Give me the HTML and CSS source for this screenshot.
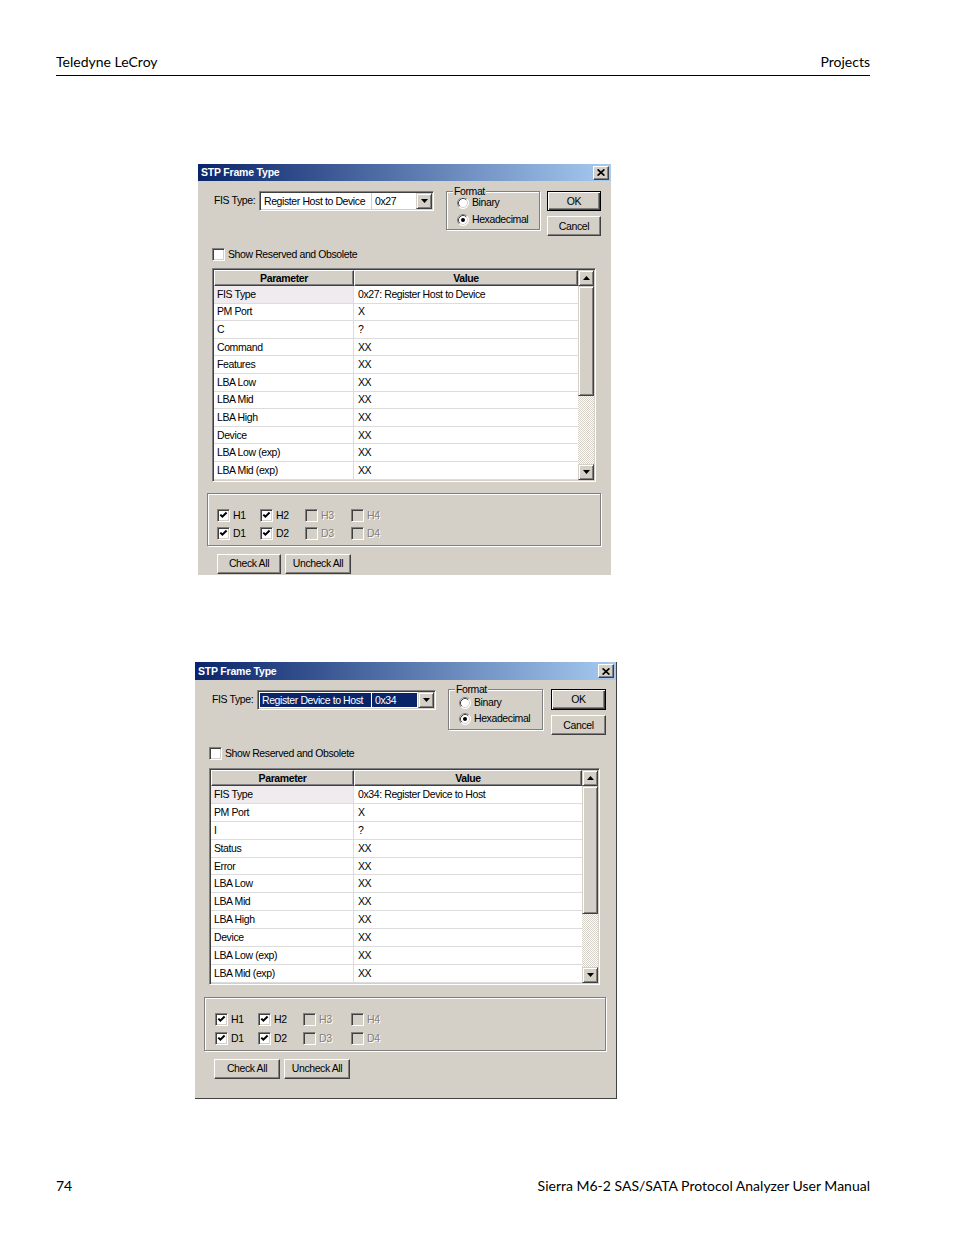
FILE: index.html
```html
<!DOCTYPE html>
<html>
<head>
<meta charset="utf-8">
<title>STP Frame Type</title>
<link rel="stylesheet" href="styles.css">
</head>
<body>
<div class="page">
  <header class="running-head"><span>Teledyne LeCroy</span><span>Projects</span></header>

  <section class="dialog d1">
    <div class="titlebar">
      <span class="title">STP Frame Type</span>
      <span class="close"><svg width="8" height="7" viewBox="0 0 8 7"><path d="M0.6 0.4 L7.4 6.6 M7.4 0.4 L0.6 6.6" stroke="#000" stroke-width="1.7" fill="none"/></svg></span>
    </div>
    <div class="toprow">
      <span class="fis-label">FIS Type:</span>
      <div class="combo">
        <div class="combo-field"><span class="c1">Register Host to Device</span><span class="c2">0x27</span></div>
        <span class="combo-btn"><svg width="7" height="4" viewBox="0 0 7 4"><path d="M0 0 H7 L3.5 4 Z" fill="#000"/></svg></span>
      </div>
      <div class="fmt">
        <span class="fmt-legend">Format</span>
        <div class="radio-row">
          <svg class="radio" width="12" height="12" viewBox="0 0 12 12"><circle cx="6" cy="6" r="5.5" fill="#fff"/><path d="M2.11 9.89 A5.5 5.5 0 0 1 9.89 2.11" stroke="#808080" fill="none"/><path d="M9.89 2.11 A5.5 5.5 0 0 1 2.11 9.89" stroke="#fff" fill="none"/><path d="M2.82 9.18 A4.5 4.5 0 0 1 9.18 2.82" stroke="#404040" fill="none"/><path d="M9.18 2.82 A4.5 4.5 0 0 1 2.82 9.18" stroke="#d4d0c8" fill="none"/></svg>
          <span>Binary</span>
        </div>
        <div class="radio-row">
          <svg class="radio" width="12" height="12" viewBox="0 0 12 12"><circle cx="6" cy="6" r="5.5" fill="#fff"/><path d="M2.11 9.89 A5.5 5.5 0 0 1 9.89 2.11" stroke="#808080" fill="none"/><path d="M9.89 2.11 A5.5 5.5 0 0 1 2.11 9.89" stroke="#fff" fill="none"/><path d="M2.82 9.18 A4.5 4.5 0 0 1 9.18 2.82" stroke="#404040" fill="none"/><path d="M9.18 2.82 A4.5 4.5 0 0 1 2.82 9.18" stroke="#d4d0c8" fill="none"/><circle cx="6" cy="6" r="2" fill="#000"/></svg>
          <span>Hexadecimal</span>
        </div>
      </div>
      <div class="btncol">
        <div class="btn default">OK</div>
        <div class="btn">Cancel</div>
      </div>
    </div>
    <div class="cbrow">
      <span class="cb"></span><span>Show Reserved and Obsolete</span>
    </div>
    <div class="grid">
      <div class="grid-main">
        <div class="ghead"><span class="h p">Parameter</span><span class="h v">Value</span></div>
        <div class="grow"><span class="cell p first">FIS Type</span><span class="cell v">0x27: Register Host to Device</span></div>
        <div class="grow"><span class="cell p">PM Port</span><span class="cell v">X</span></div>
        <div class="grow"><span class="cell p">C</span><span class="cell v">?</span></div>
        <div class="grow"><span class="cell p">Command</span><span class="cell v">XX</span></div>
        <div class="grow"><span class="cell p">Features</span><span class="cell v">XX</span></div>
        <div class="grow"><span class="cell p">LBA Low</span><span class="cell v">XX</span></div>
        <div class="grow"><span class="cell p">LBA Mid</span><span class="cell v">XX</span></div>
        <div class="grow"><span class="cell p">LBA High</span><span class="cell v">XX</span></div>
        <div class="grow"><span class="cell p">Device</span><span class="cell v">XX</span></div>
        <div class="grow"><span class="cell p">LBA Low (exp)</span><span class="cell v">XX</span></div>
        <div class="grow"><span class="cell p">LBA Mid (exp)</span><span class="cell v">XX</span></div>
      </div>
      <div class="scrollbar">
        <span class="sb-btn"><svg width="7" height="4" viewBox="0 0 7 4"><path d="M3.5 0 L7 4 H0 Z" fill="#000"/></svg></span>
        <span class="sb-thumb"></span>
        <span class="sb-track"></span>
        <span class="sb-btn"><svg width="7" height="4" viewBox="0 0 7 4"><path d="M0 0 H7 L3.5 4 Z" fill="#000"/></svg></span>
      </div>
    </div>
    <div class="grp">
      <div class="cbgrid">
        <span class="cbitem"><span class="cb"><svg width="11" height="11" viewBox="0 0 11 11"><path d="M2.3 4.6 L4.4 6.7 L8.6 2.5" stroke="#000" stroke-width="2" fill="none"/></svg></span><span>H1</span></span>
        <span class="cbitem"><span class="cb"><svg width="11" height="11" viewBox="0 0 11 11"><path d="M2.3 4.6 L4.4 6.7 L8.6 2.5" stroke="#000" stroke-width="2" fill="none"/></svg></span><span>H2</span></span>
        <span class="cbitem dis"><span class="cb"></span><span>H3</span></span>
        <span class="cbitem dis"><span class="cb"></span><span>H4</span></span>
        <span class="cbitem"><span class="cb"><svg width="11" height="11" viewBox="0 0 11 11"><path d="M2.3 4.6 L4.4 6.7 L8.6 2.5" stroke="#000" stroke-width="2" fill="none"/></svg></span><span>D1</span></span>
        <span class="cbitem"><span class="cb"><svg width="11" height="11" viewBox="0 0 11 11"><path d="M2.3 4.6 L4.4 6.7 L8.6 2.5" stroke="#000" stroke-width="2" fill="none"/></svg></span><span>D2</span></span>
        <span class="cbitem dis"><span class="cb"></span><span>D3</span></span>
        <span class="cbitem dis"><span class="cb"></span><span>D4</span></span>
      </div>
    </div>
    <div class="btnrow">
      <div class="btn check">Check All</div>
      <div class="btn uncheck">Uncheck All</div>
    </div>
  </section>

  <section class="dialog d2">
    <div class="titlebar">
      <span class="title">STP Frame Type</span>
      <span class="close"><svg width="8" height="7" viewBox="0 0 8 7"><path d="M0.6 0.4 L7.4 6.6 M7.4 0.4 L0.6 6.6" stroke="#000" stroke-width="1.7" fill="none"/></svg></span>
    </div>
    <div class="toprow">
      <span class="fis-label">FIS Type:</span>
      <div class="combo">
        <div class="combo-field sel"><span class="c1">Register Device to Host</span><span class="c2">0x34</span></div>
        <span class="combo-btn"><svg width="7" height="4" viewBox="0 0 7 4"><path d="M0 0 H7 L3.5 4 Z" fill="#000"/></svg></span>
      </div>
      <div class="fmt">
        <span class="fmt-legend">Format</span>
        <div class="radio-row">
          <svg class="radio" width="12" height="12" viewBox="0 0 12 12"><circle cx="6" cy="6" r="5.5" fill="#fff"/><path d="M2.11 9.89 A5.5 5.5 0 0 1 9.89 2.11" stroke="#808080" fill="none"/><path d="M9.89 2.11 A5.5 5.5 0 0 1 2.11 9.89" stroke="#fff" fill="none"/><path d="M2.82 9.18 A4.5 4.5 0 0 1 9.18 2.82" stroke="#404040" fill="none"/><path d="M9.18 2.82 A4.5 4.5 0 0 1 2.82 9.18" stroke="#d4d0c8" fill="none"/></svg>
          <span>Binary</span>
        </div>
        <div class="radio-row">
          <svg class="radio" width="12" height="12" viewBox="0 0 12 12"><circle cx="6" cy="6" r="5.5" fill="#fff"/><path d="M2.11 9.89 A5.5 5.5 0 0 1 9.89 2.11" stroke="#808080" fill="none"/><path d="M9.89 2.11 A5.5 5.5 0 0 1 2.11 9.89" stroke="#fff" fill="none"/><path d="M2.82 9.18 A4.5 4.5 0 0 1 9.18 2.82" stroke="#404040" fill="none"/><path d="M9.18 2.82 A4.5 4.5 0 0 1 2.82 9.18" stroke="#d4d0c8" fill="none"/><circle cx="6" cy="6" r="2" fill="#000"/></svg>
          <span>Hexadecimal</span>
        </div>
      </div>
      <div class="btncol">
        <div class="btn default">OK</div>
        <div class="btn">Cancel</div>
      </div>
    </div>
    <div class="cbrow">
      <span class="cb"></span><span>Show Reserved and Obsolete</span>
    </div>
    <div class="grid">
      <div class="grid-main">
        <div class="ghead"><span class="h p">Parameter</span><span class="h v">Value</span></div>
        <div class="grow"><span class="cell p first">FIS Type</span><span class="cell v">0x34: Register Device to Host</span></div>
        <div class="grow"><span class="cell p">PM Port</span><span class="cell v">X</span></div>
        <div class="grow"><span class="cell p">I</span><span class="cell v">?</span></div>
        <div class="grow"><span class="cell p">Status</span><span class="cell v">XX</span></div>
        <div class="grow"><span class="cell p">Error</span><span class="cell v">XX</span></div>
        <div class="grow"><span class="cell p">LBA Low</span><span class="cell v">XX</span></div>
        <div class="grow"><span class="cell p">LBA Mid</span><span class="cell v">XX</span></div>
        <div class="grow"><span class="cell p">LBA High</span><span class="cell v">XX</span></div>
        <div class="grow"><span class="cell p">Device</span><span class="cell v">XX</span></div>
        <div class="grow"><span class="cell p">LBA Low (exp)</span><span class="cell v">XX</span></div>
        <div class="grow"><span class="cell p">LBA Mid (exp)</span><span class="cell v">XX</span></div>
      </div>
      <div class="scrollbar">
        <span class="sb-btn"><svg width="7" height="4" viewBox="0 0 7 4"><path d="M3.5 0 L7 4 H0 Z" fill="#000"/></svg></span>
        <span class="sb-thumb"></span>
        <span class="sb-track"></span>
        <span class="sb-btn"><svg width="7" height="4" viewBox="0 0 7 4"><path d="M0 0 H7 L3.5 4 Z" fill="#000"/></svg></span>
      </div>
    </div>
    <div class="grp">
      <div class="cbgrid">
        <span class="cbitem"><span class="cb"><svg width="11" height="11" viewBox="0 0 11 11"><path d="M2.3 4.6 L4.4 6.7 L8.6 2.5" stroke="#000" stroke-width="2" fill="none"/></svg></span><span>H1</span></span>
        <span class="cbitem"><span class="cb"><svg width="11" height="11" viewBox="0 0 11 11"><path d="M2.3 4.6 L4.4 6.7 L8.6 2.5" stroke="#000" stroke-width="2" fill="none"/></svg></span><span>H2</span></span>
        <span class="cbitem dis"><span class="cb"></span><span>H3</span></span>
        <span class="cbitem dis"><span class="cb"></span><span>H4</span></span>
        <span class="cbitem"><span class="cb"><svg width="11" height="11" viewBox="0 0 11 11"><path d="M2.3 4.6 L4.4 6.7 L8.6 2.5" stroke="#000" stroke-width="2" fill="none"/></svg></span><span>D1</span></span>
        <span class="cbitem"><span class="cb"><svg width="11" height="11" viewBox="0 0 11 11"><path d="M2.3 4.6 L4.4 6.7 L8.6 2.5" stroke="#000" stroke-width="2" fill="none"/></svg></span><span>D2</span></span>
        <span class="cbitem dis"><span class="cb"></span><span>D3</span></span>
        <span class="cbitem dis"><span class="cb"></span><span>D4</span></span>
      </div>
    </div>
    <div class="btnrow">
      <div class="btn check">Check All</div>
      <div class="btn uncheck">Uncheck All</div>
    </div>
  </section>

  <footer class="running-foot"><span>74</span><span>Sierra M6-2 SAS/SATA Protocol Analyzer User Manual</span></footer>
</div>
</body>
</html>
```

FILE: styles.css
```css
* { box-sizing: border-box; }
html, body { margin: 0; padding: 0; background: #fff; }

.page {
  width: 954px;
  height: 1235px;
  display: flex;
  flex-direction: column;
  align-items: flex-start;
  font-family: Lato, "Liberation Sans", sans-serif;
  color: #000;
}

.running-head {
  align-self: stretch;
  margin: 0 84px 0 56px;
  padding-top: 53px;
  padding-bottom: 4px;
  border-bottom: 1px solid #000;
  display: flex;
  justify-content: space-between;
  font-size: 14px;
  line-height: 18px;
}

.running-foot {
  align-self: stretch;
  margin: auto 84px 0 56px;
  padding-bottom: 40px;
  display: flex;
  justify-content: space-between;
  font-size: 14px;
  line-height: 18px;
}

/* ---------- dialog ---------- */
.dialog {
  background: #d4d0c8;
  font-family: "Liberation Sans", Arial, sans-serif;
  font-size: 10.5px;
  letter-spacing: -0.4px;
  line-height: 13px;
  color: #000;
  display: flex;
  flex-direction: column;
  align-items: flex-start;
}
.d1 { width: 413px; height: 411px; margin: 88px 0 0 198px; }
.d2 { width: 422px; height: 437px; margin: 87px 0 0 195px; border-right: 1px solid #404040; border-bottom: 1px solid #404040; }

.titlebar {
  align-self: stretch;
  height: 17px;
  background: linear-gradient(to right, #0a246a, #a6caf0);
  display: flex;
  align-items: center;
  justify-content: space-between;
  padding: 0 2px 0 3px;
}
.d2 .titlebar { height: 18px; }
.title { color: #fff; font-weight: bold; letter-spacing: -0.2px; }
.close {
  width: 16px;
  height: 14px;
  background: #d4d0c8;
  border: 1px solid;
  border-color: #fff #404040 #404040 #fff;
  box-shadow: inset -1px -1px #808080;
  display: flex;
  align-items: center;
  justify-content: center;
}

.raised {
  border: 1px solid;
}

/* top row */
.toprow { display: flex; align-items: flex-start; margin: 9px 0 0 16px; }
.d2 .toprow { margin-left: 17px; }
.fis-label { width: 45px; margin-top: 4px; }

.combo {
  width: 175px;
  height: 20px;
  margin-top: 1px;
  display: flex;
  background: #fff;
  border: 1px solid;
  border-color: #808080 #fff #fff #808080;
  box-shadow: inset 1px 1px #404040, inset -1px -1px #d4d0c8;
  padding: 1px;
}
.d2 .combo { width: 179px; }
.combo-field { flex: 1; display: flex; align-items: center; }
.combo-field .c1 { width: 111px; padding-left: 3px; white-space: nowrap; border-right: 1px solid #d4d0c8; align-self: stretch; display: flex; align-items: center; }
.combo-field .c2 { padding-left: 3px; }
.d2 .combo-field .c1 { width: 113px; }
.combo-field.sel { background: #0a246a; color: #fff; box-shadow: inset 0 0 0 1px #fff; }
.combo-field.sel .c1 { border-right-color: #fff; }
.combo-btn {
  width: 16px;
  height: 16px;
  background: #d4d0c8;
  border: 1px solid;
  border-color: #d4d0c8 #404040 #404040 #d4d0c8;
  box-shadow: inset 1px 1px #fff, inset -1px -1px #808080;
  display: flex;
  align-items: center;
  justify-content: center;
}

.fmt {
  position: relative;
  width: 94px;
  height: 39px;
  margin: 1px 0 0 12px;
  border: 1px solid #808080;
  box-shadow: inset 1px 1px #fff, 1px 1px #fff;
  padding: 4px 0 0 10px;
  display: flex;
  flex-direction: column;
  gap: 4px;
}
.d2 .fmt { width: 95px; height: 41px; margin-top: 0; padding-top: 6px; gap: 3px; }
.fmt-legend {
  position: absolute;
  top: -7px;
  left: 6px;
  padding: 0 1px;
  background: #d4d0c8;
}
.radio-row { display: flex; align-items: center; gap: 3px; height: 13px; }
.radio { display: block; flex: none; }

.btncol { margin: 1px 0 0 7px; display: flex; flex-direction: column; gap: 5px; }
.d2 .btncol { margin: 0 0 0 8px; }
.btn {
  width: 54px;
  height: 20px;
  display: flex;
  align-items: center;
  justify-content: center;
  background: #d4d0c8;
  border: 1px solid;
  border-color: #fff #404040 #404040 #fff;
  box-shadow: inset -1px -1px #808080;
  white-space: nowrap;
}
.btn.default {
  border: 1px solid #000;
  box-shadow: inset 1px 1px #fff, inset -1px -1px #404040, inset -2px -2px #808080;
}
.d2 .btn { width: 55px; }
.d2 .btn.default { height: 21px; }

/* checkbox */
.cbrow { display: flex; align-items: center; gap: 3px; margin: 12px 0 0 14px; }
.cb {
  width: 13px;
  height: 13px;
  flex: none;
  background: #fff;
  border: 1px solid;
  border-color: #808080 #fff #fff #808080;
  box-shadow: inset 1px 1px #404040, inset -1px -1px #d4d0c8;
}
.cb svg { display: block; }

/* grid */
.grid {
  display: flex;
  width: 384px;
  margin: 7px 0 0 14px;
  border: 1px solid;
  border-color: #808080 #fff #fff #808080;
  box-shadow: inset 1px 1px #404040, inset -1px -1px #d4d0c8;
  padding: 1px;
}
.d2 .grid { width: 391px; margin-top: 8px; }
.grid-main { flex: 1; background: #fff; }
.ghead { display: flex; height: 16px; }
.h {
  background: #d4d0c8;
  font-weight: bold;
  display: flex;
  align-items: center;
  justify-content: center;
  border: 1px solid;
  border-color: #fff #404040 #404040 #fff;
  box-shadow: inset -1px -1px #808080;
}
.h.p, .cell.p { width: 140px; flex: none; }
.d2 .h.p, .d2 .cell.p { width: 143px; }
.h.v { flex: 1; }
.grow { display: flex; height: 17.6px; border-bottom: 1px solid #dcdcdc; }
.d2 .grow { height: 17.9px; }
.cell { display: flex; align-items: center; white-space: nowrap; }
.cell.p { padding-left: 3px; border-right: 1px solid #dcdcdc; }
.cell.p.first { background: #efebef; }
.cell.v { flex: 1; padding-left: 4px; }

.scrollbar { width: 16px; flex: none; display: flex; flex-direction: column; }
.sb-btn {
  height: 16px;
  flex: none;
  background: #d4d0c8;
  border: 1px solid;
  border-color: #d4d0c8 #404040 #404040 #d4d0c8;
  box-shadow: inset 1px 1px #fff, inset -1px -1px #808080;
  display: flex;
  align-items: center;
  justify-content: center;
}
.sb-thumb {
  height: 110px;
  flex: none;
  background: #d4d0c8;
  border: 1px solid;
  border-color: #d4d0c8 #404040 #404040 #d4d0c8;
  box-shadow: inset 1px 1px #fff, inset -1px -1px #808080;
}
.d2 .sb-thumb { height: 128px; }
.sb-track {
  flex: 1;
  background: repeating-conic-gradient(#fff 0 25%, #d4d0c8 0 50%) 0 0 / 2px 2px;
}

/* group */
.grp {
  width: 394px;
  height: 53px;
  margin: 11px 0 0 9px;
  border: 1px solid #808080;
  box-shadow: inset 1px 1px #fff, 1px 1px #fff;
  padding: 15px 0 0 9px;
}
.d2 .grp { width: 402px; height: 54px; margin-top: 12px; padding: 15px 0 0 10px; }
.cbgrid {
  display: grid;
  grid-template-columns: 43px 45px 46px 40px;
  row-gap: 5px;
}
.d2 .cbgrid { grid-template-columns: 43px 45px 48px 40px; row-gap: 6px; }
.cbitem { display: flex; align-items: center; gap: 3px; height: 13px; }
.cbitem.dis { color: #808080; text-shadow: 1px 1px #fff; }
.cbitem.dis .cb { background: #d4d0c8; }

.btnrow { display: flex; gap: 4px; margin: 8px 0 0 19px; }
.btn.check { width: 64px; }
.btn.uncheck { width: 66px; }
.d2 .btn.check { width: 66px; }
.d2 .btn.uncheck { width: 66px; }
```
